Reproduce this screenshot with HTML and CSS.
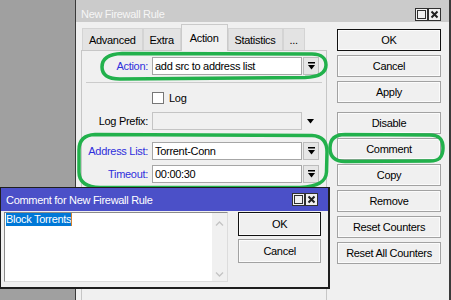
FILE: index.html
```html
<!doctype html>
<html lang="en">
<head>
<meta charset="UTF-8">
<title>New Firewall Rule</title>
<link rel="stylesheet" href="styles.css">
</head>
<body>
<!-- main window -->
<div class="win main">
	<div class="titlebar">
		<span class="title">New Firewall Rule</span>
		<span class="tbtns">
			<svg class="tbtn" width="13" height="13" viewBox="0 0 13 13"><rect x="0.5" y="0.5" width="12" height="12" fill="#f0f0f0" stroke="#303030"/><rect x="2.5" y="2.5" width="8" height="8" fill="none" stroke="#303030"/></svg>
			<svg class="tbtn" width="13" height="13" viewBox="0 0 13 13"><rect x="0.5" y="0.5" width="12" height="12" fill="#f0f0f0" stroke="#303030"/><path d="M3.5 3.5L9.5 9.5M9.5 3.5L3.5 9.5" stroke="#202020" stroke-width="2"/></svg>
		</span>
	</div>
	<div class="winbody">
		<div class="tabside">
			<div class="tabs">
				<span class="tab">Advanced</span>
				<span class="tab">Extra</span>
				<span class="tab on">Action</span>
				<span class="tab">Statistics</span>
				<span class="tab">...</span>
			</div>
			<div class="panel">
				<div class="row">
					<span class="lbl blue">Action:</span>
					<span class="field">add src to address list</span>
					<span class="dd"><svg width="9" height="8" viewBox="0 0 9 8"><rect x="1" y="0" width="7" height="1.5"/><polygon points="1,3 8,3 4.5,7.5"/></svg></span>
				</div>
				<div class="sep"></div>
				<div class="row row-check">
					<span class="cb"></span><span>Log</span>
				</div>
				<div class="row row-prefix">
					<span class="lbl">Log Prefix:</span>
					<span class="field empty"></span>
					<svg class="tri" width="7" height="5" viewBox="0 0 7 5"><polygon points="0,0 7,0 3.5,4.5"/></svg>
				</div>
				<div class="row row-addr">
					<span class="lbl blue">Address List:</span>
					<span class="field">Torrent-Conn</span>
					<span class="dd"><svg width="9" height="8" viewBox="0 0 9 8"><rect x="1" y="0" width="7" height="1.5"/><polygon points="1,3 8,3 4.5,7.5"/></svg></span>
				</div>
				<div class="row row-time">
					<span class="lbl blue">Timeout:</span>
					<span class="field">00:00:30</span>
					<span class="dd"><svg width="9" height="8" viewBox="0 0 9 8"><rect x="1" y="0" width="7" height="1.5"/><polygon points="1,3 8,3 4.5,7.5"/></svg></span>
				</div>
			</div>
		</div>
		<div class="btncol">
			<button class="btn def">OK</button>
			<button class="btn">Cancel</button>
			<button class="btn">Apply</button>
			<button class="btn group">Disable</button>
			<button class="btn">Comment</button>
			<button class="btn">Copy</button>
			<button class="btn">Remove</button>
			<button class="btn">Reset Counters</button>
			<button class="btn">Reset All Counters</button>
		</div>
	</div>
</div>

<!-- green marker loops drawn over the window -->
<svg class="marks" width="451" height="300" viewBox="0 0 451 300">
	<path d="M122 53.5L312 54C322 54 326 59 326 65C326 72 320 77 305 77.5L120 79C108 79 102 75 102 67C102 59 108 54 122 53.5Z"/>
	<path d="M95 134.5L312 135.5C323 136 327 143 327 152L326.5 172C326 182 318 186 300 187.5L100 187.5C86 187 79 182 79 172L79 150C79 140 84 135 95 134.5Z"/>
	<path d="M345 134.5L430 135C440 135 443 140 443 148C443 157 439 161 430 161L345 161.5C334 161.5 330 156 330 148C330 139 335 134.5 345 134.5Z"/>
</svg>

<!-- comment dialog -->
<div class="win dlg">
	<div class="titlebar">
		<span class="title">Comment for New Firewall Rule</span>
		<span class="tbtns">
			<svg class="tbtn" width="13" height="13" viewBox="0 0 13 13"><rect x="0.5" y="0.5" width="12" height="12" fill="#f0f0f0" stroke="#303030"/><rect x="2.5" y="2.5" width="8" height="8" fill="none" stroke="#303030"/></svg>
			<svg class="tbtn" width="13" height="13" viewBox="0 0 13 13"><rect x="0.5" y="0.5" width="12" height="12" fill="#f0f0f0" stroke="#303030"/><path d="M3.5 3.5L9.5 9.5M9.5 3.5L3.5 9.5" stroke="#202020" stroke-width="2"/></svg>
		</span>
	</div>
	<div class="dbody">
		<div class="memo">
			<div class="memo-text"><span class="sel">Block Torrents</span><span class="caret"></span></div>
			<div class="scroll">
				<svg width="9" height="5" viewBox="0 0 9 5"><path d="M1 4.5L4.5 1L8 4.5" fill="none" stroke="#c4c4c4" stroke-width="1.3"/></svg>
				<svg width="9" height="5" viewBox="0 0 9 5"><path d="M1 0.5L4.5 4L8 0.5" fill="none" stroke="#c4c4c4" stroke-width="1.3"/></svg>
			</div>
		</div>
		<div class="dbtns">
			<button class="btn def">OK</button>
			<button class="btn">Cancel</button>
		</div>
	</div>
</div>
</body>
</html>
```

FILE: styles.css
```css
html,body{
	margin:0; padding:0;
}
body{
	width:451px; height:300px; overflow:hidden; position:relative;
	background:#a0a0a0; color:#000;
	font:11px "Liberation Sans", Arial, sans-serif; letter-spacing:-0.3px;
}

/* windows */
.win{
	position:absolute; box-sizing:border-box; background:#f0f0f0;
}
.main{
	left:75px; top:0; width:376px; height:300px;
	border-left:1px solid #3a3a3a; border-right:2px solid #3a3a3a;
}
.titlebar{
	height:22px; box-sizing:border-box; padding:6px 8px 0 5px;
	display:flex; align-items:center; justify-content:space-between;
	background:#cbcbcb; color:#f6f6f6;
}
.tbtns{ display:flex; }
.tbtn{ display:block; }

.winbody{ display:flex; align-items:flex-start; }

/* tabs */
.tabside{ width:246px; margin:2px 0 0 5px; }
.tabs{
	display:flex; align-items:flex-end; height:26px; padding-left:1px;
	position:relative; z-index:1;
}
.tab{
	height:22px; box-sizing:border-box; padding:0 6px;
	display:flex; align-items:center;
	border:1px solid #d4d4d4; border-bottom:none; background:#e3e3e3;
}
.tab.on{
	height:27px; margin-bottom:-1px; padding:0 8px;
	background:#f0f0f0; border-color:#cacaca;
}
.panel{
	height:260px; box-sizing:border-box; padding-top:6px;
	border:1px solid #c6c6c6;
}

/* form rows */
.row{ display:flex; align-items:center; height:18px; }
.lbl{ width:66px; margin-right:4px; flex:none; text-align:right; white-space:nowrap; }
.blue{ color:#2f2fdc; }
.field{
	width:150px; height:18px; box-sizing:border-box; padding:0 2px;
	border:1px solid #a6a6a6; background:#fff;
	line-height:16px; white-space:nowrap; overflow:hidden;
}
.field.empty{ background:#f0f0f0; border-color:#c4c4c4; }
.dd{
	width:16px; height:18px; margin-left:1px; box-sizing:border-box;
	border:1px solid #bcbcbc; background:#e6e6e6;
	display:flex; align-items:center; justify-content:center;
}
.sep{ height:1px; margin:7px 4px 0 4px; background:#cbcbcb; }
.row-check{ height:12px; margin:9px 0 0 70px; gap:5px; }
.cb{ width:12px; height:12px; box-sizing:border-box; border:1px solid #777; background:#fff; }
.row-prefix{ margin-top:8px; }
.tri{ margin-left:5px; }
.row-addr{ margin-top:12px; }
.row-time{ margin-top:5px; }

/* buttons */
.btncol{
	width:104px; margin:7px 0 0 10px;
	display:flex; flex-direction:column; gap:4px;
}
.btn{
	height:22px; padding:0; margin:0;
	font:inherit; letter-spacing:inherit; color:#000;
	background:#f0f0f0; border:1px solid #a2a2a2;
	box-shadow:inset 0 0 0 1px #fbfbfb;
}
.btn.def{ border-color:#111; }
.btn.group{ margin-top:5px; }

/* markers */
.marks{ position:absolute; left:0; top:0; }
.marks path{ fill:none; stroke:#22b14c; stroke-width:3.5; stroke-linejoin:round; }

/* comment dialog */
.dlg{
	left:0; top:187px; width:330px; height:102px;
	border:1px solid #1e1e1e; border-width:1px 2px 2px 1px;
}
.dlg .titlebar{
	height:23px; padding:0 10px 0 5px;
	background:#4b50c8; color:#fff;
}
.dbody{ display:flex; gap:10px; padding:1px 7px 0 3px; }
.memo{
	width:225px; height:70px; box-sizing:border-box; display:flex;
	border:1px solid #8a8a8a; border-right-color:#dcdcdc; border-bottom-color:#dcdcdc;
	background:#fff;
}
.memo-text{ flex:1; padding-left:1px; line-height:13px; display:flex; align-items:flex-start; }
.sel{ background:#0078d7; color:#fff; }
.caret{ width:1px; height:13px; background:#d08030; }
.scroll{
	width:15px; background:#f0f0f0;
	display:flex; flex-direction:column; justify-content:space-between; align-items:center;
	padding:8px 0 4px;
}
.scroll svg{ display:block; }
.dbtns{ width:83px; display:flex; flex-direction:column; gap:3px; }
.dbtns .btn{ height:24px; }
```
